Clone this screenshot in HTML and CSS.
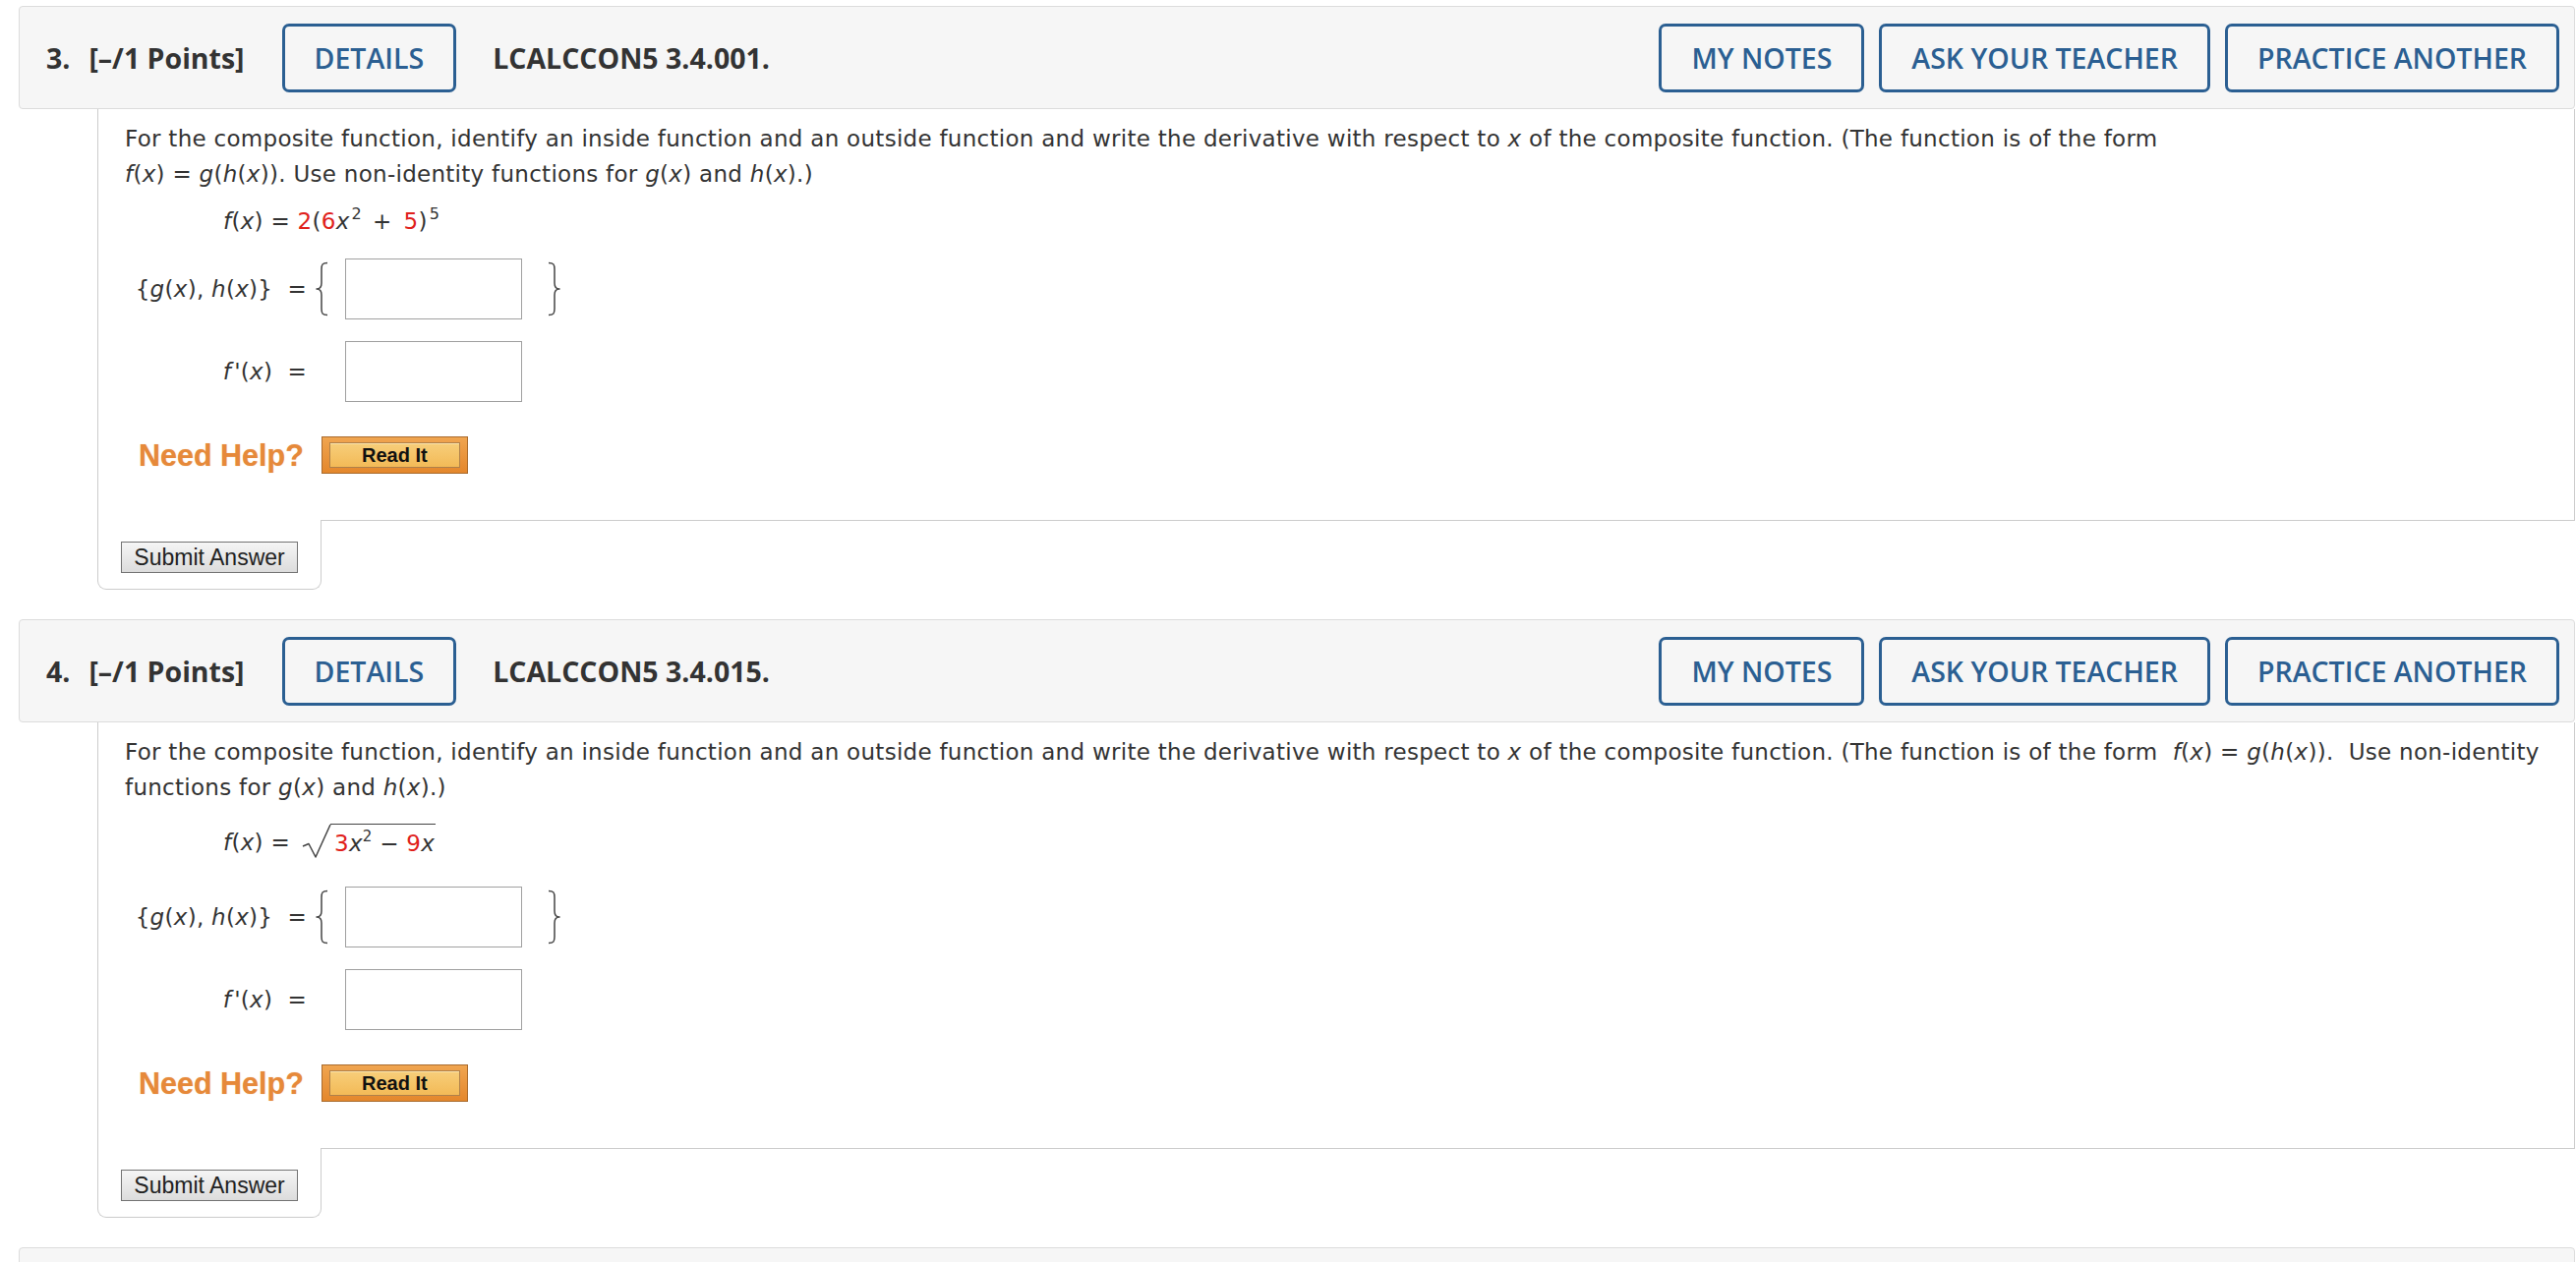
FILE: index.html
```html
<!DOCTYPE html>
<html lang="en">
<head>
<meta charset="utf-8">
<title>WebAssign questions</title>
<link rel="stylesheet" href="styles.css">
</head>
<body>
<div class="page">

  <section class="question">
    <div class="qhead">
      <span class="qnum">3.</span>
      <span class="qpts">[–/1 Points]</span>
      <button class="hbtn">DETAILS</button>
      <span class="qid">LCALCCON5 3.4.001.</span>
      <div class="hright">
        <button class="hbtn">MY NOTES</button>
        <button class="hbtn">ASK YOUR TEACHER</button>
        <button class="hbtn">PRACTICE ANOTHER</button>
      </div>
    </div>
    <div class="qbody">
      <p class="prompt">For the composite function, identify an inside function and an outside function and write the derivative with respect to <i>x</i> of the composite function. (The function is of the form<br><i>f</i>(<i>x</i>) = <i>g</i>(<i>h</i>(<i>x</i>)). Use non-identity functions for <i>g</i>(<i>x</i>) and <i>h</i>(<i>x</i>).)</p>
      <div class="formula"><i>f</i>(<i>x</i>) = <span class="red">2</span>(<span class="red">6</span><i>x</i><sup class="sp">2</sup><span class="op">+</span><span class="red">5</span>)<sup class="sp">5</sup></div>
      <div class="answers">
        <div class="alabel">{<i>g</i>(<i>x</i>), <i>h</i>(<i>x</i>)} &nbsp;=</div>
        <svg class="brace" viewBox="0 0 16 56" width="16" height="56"><path d="M13 1.5 C8 1.5 7 3 7 8 L7 22 C7 26 5 28 2 28 C5 28 7 30 7 34 L7 48 C7 53 8 54.5 13 54.5"/></svg>
        <input class="ans" type="text">
        <svg class="brace right" viewBox="0 0 16 56" width="16" height="56"><path d="M3 1.5 C8 1.5 9 3 9 8 L9 22 C9 26 11 28 14 28 C11 28 9 30 9 34 L9 48 C9 53 8 54.5 3 54.5"/></svg>
        <div class="alabel"><i class="fp">f</i>'(<i>x</i>) &nbsp;=</div>
        <input class="ans second" type="text">
      </div>
      <div class="help">
        <span class="needhelp">Need Help?</span>
        <span class="readit"><span class="readit-in">Read It</span></span>
      </div>
    </div>
    <div class="qfoot">
      <div class="submittab"><button class="submit">Submit Answer</button></div>
      <div class="footfill"></div>
    </div>
  </section>

  <section class="question">
    <div class="qhead">
      <span class="qnum">4.</span>
      <span class="qpts">[–/1 Points]</span>
      <button class="hbtn">DETAILS</button>
      <span class="qid">LCALCCON5 3.4.015.</span>
      <div class="hright">
        <button class="hbtn">MY NOTES</button>
        <button class="hbtn">ASK YOUR TEACHER</button>
        <button class="hbtn">PRACTICE ANOTHER</button>
      </div>
    </div>
    <div class="qbody">
      <p class="prompt">For the composite function, identify an inside function and an outside function and write the derivative with respect to <i>x</i> of the composite function. (The function is of the form&nbsp; <i>f</i>(<i>x</i>) = <i>g</i>(<i>h</i>(<i>x</i>)).&nbsp; Use non-identity<br>functions for <i>g</i>(<i>x</i>) and <i>h</i>(<i>x</i>).)</p>
      <div class="formula tall"><span class="lhs"><i>f</i>(<i>x</i>) =</span><span class="root"><svg class="radical" viewBox="0 0 30 40" width="30" height="40"><path d="M1 23 L7 20.5 L14 34 L29 1"/></svg><span class="radicand"><span class="red">3</span><i>x</i><sup>2</sup> − <span class="red">9</span><i>x</i></span></span></div>
      <div class="answers">
        <div class="alabel">{<i>g</i>(<i>x</i>), <i>h</i>(<i>x</i>)} &nbsp;=</div>
        <svg class="brace" viewBox="0 0 16 56" width="16" height="56"><path d="M13 1.5 C8 1.5 7 3 7 8 L7 22 C7 26 5 28 2 28 C5 28 7 30 7 34 L7 48 C7 53 8 54.5 13 54.5"/></svg>
        <input class="ans" type="text">
        <svg class="brace right" viewBox="0 0 16 56" width="16" height="56"><path d="M3 1.5 C8 1.5 9 3 9 8 L9 22 C9 26 11 28 14 28 C11 28 9 30 9 34 L9 48 C9 53 8 54.5 3 54.5"/></svg>
        <div class="alabel"><i class="fp">f</i>'(<i>x</i>) &nbsp;=</div>
        <input class="ans second" type="text">
      </div>
      <div class="help">
        <span class="needhelp">Need Help?</span>
        <span class="readit"><span class="readit-in">Read It</span></span>
      </div>
    </div>
    <div class="qfoot">
      <div class="submittab"><button class="submit">Submit Answer</button></div>
      <div class="footfill"></div>
    </div>
  </section>

  <section class="question">
    <div class="qhead empty"></div>
  </section>

</div>
</body>
</html>
```

FILE: styles.css
```css
html, body {
  margin: 0;
  padding: 0;
  background: #ffffff;
}

body {
  font-family: "DejaVu Sans", Verdana, sans-serif;
  font-size: 23px;
  letter-spacing: 0.28px;
  color: #333333;
  overflow: hidden;
}

.page {
  padding: 6px 1px 0 19px;
}

.question + .question {
  margin-top: 30px;
}

/* ---------- header bar ---------- */
.qhead {
  box-sizing: border-box;
  height: 105px;
  display: flex;
  align-items: center;
  background: #f6f6f6;
  border: 1px solid #dcdcdc;
  border-radius: 4px;
  padding: 0 15px 0 27px;
  font-family: "Open Sans", sans-serif;
  font-weight: 700;
  font-size: 28.5px;
  letter-spacing: 0;
  color: #333333;
}

.qnum {
  margin-right: 19px;
}

.qpts {
  margin-right: 38px;
}

.qid {
  margin-left: 37px;
}

.hright {
  margin-left: auto;
  display: flex;
  gap: 15px;
}

.hbtn {
  box-sizing: border-box;
  height: 70px;
  padding: 0 30px;
  border: 3px solid #2b5f92;
  border-radius: 7px;
  background: transparent;
  font-family: "Open Sans", sans-serif;
  font-weight: 600;
  font-size: 28.5px;
  color: #2b5f92;
  cursor: pointer;
}

/* ---------- question body ---------- */
.qbody {
  margin-left: 80px;
  border-left: 1px solid #cccccc;
  border-right: 1px solid #cccccc;
  padding: 12px 20px 47px 27px;
}

.prompt {
  margin: 0;
  line-height: 36px;
  white-space: nowrap;
}

.red {
  color: #e0211b;
}

sup {
  font-size: 15px;
  line-height: 0;
  vertical-align: 10px;
}

sup.sp {
  font-size: 16px;
  margin: 0 1px 0 2px;
}

.op {
  margin: 0 12px 0 10px;
}

.formula {
  margin: 12px 0 0 100px;
  height: 36px;
  line-height: 36px;
  white-space: nowrap;
}

.formula.tall {
  height: 51px;
  display: flex;
  align-items: center;
}

.root {
  display: flex;
  align-items: flex-start;
  margin-left: 12px;
  margin-top: 3px;
}

.radical {
  display: block;
}

.radical path,
.brace path {
  fill: none;
  stroke: #444444;
  stroke-width: 1.5;
  stroke-linejoin: round;
}

.radicand {
  display: block;
  border-top: 1.5px solid #444444;
  line-height: 32px;
  padding: 3px 1px 0 4px;
  margin-left: -1px;
  margin-top: 0.3px;
}

/* ---------- answer grid ---------- */
.answers {
  margin-top: 20px;
  display: grid;
  grid-template-columns: 185px 39px 180px 40px;
  grid-auto-rows: 62px;
  row-gap: 22px;
  align-items: center;
}

.alabel {
  text-align: right;
  white-space: nowrap;
}

.fp {
  margin-right: 3px;
}

.brace {
  display: block;
  margin-left: 8px;
}

.brace.right {
  margin-left: 24px;
}

.ans {
  box-sizing: border-box;
  width: 180px;
  height: 62px;
  margin: 0;
  border: 1px solid #a0a0a0;
  background: #ffffff;
  padding: 0 6px;
  font: inherit;
}

.ans.second {
  grid-column: 3;
}

/* ---------- help ---------- */
.help {
  margin-top: 35px;
  margin-left: 14px;
  display: flex;
  align-items: center;
  height: 38px;
  letter-spacing: 0;
}

.needhelp {
  font-family: "Liberation Sans", Arial, sans-serif;
  font-weight: 700;
  font-size: 30.5px;
  color: #e6893a;
  margin-right: 18px;
  text-shadow: 0 0 1px rgba(230, 137, 58, 0.5);
}

.readit {
  box-sizing: border-box;
  width: 149px;
  height: 38px;
  display: flex;
  padding: 5px 7px;
  border: 1px solid #a96b2e;
  background: linear-gradient(#f0a550, #e4872c);
}

.readit-in {
  flex: 1;
  border: 1px solid #b0814a;
  background: linear-gradient(#f7ce7a, #f3ba57);
  box-shadow: inset 0 1px 0 #fbe3ad;
  font-family: "Liberation Sans", Arial, sans-serif;
  font-weight: 700;
  font-size: 20px;
  line-height: 24px;
  text-align: center;
  color: #111111;
}

/* ---------- footer / submit tab ---------- */
.qfoot {
  margin-left: 80px;
  display: flex;
}

.submittab {
  box-sizing: border-box;
  width: 228px;
  border: 1px solid #cccccc;
  border-top: none;
  border-radius: 0 0 9px 9px;
  padding: 22px 0 16px 23px;
}

.submit {
  box-sizing: border-box;
  width: 180px;
  height: 32px;
  padding: 0;
  border: 1px solid #737373;
  background: linear-gradient(#f5f5f5, #dcdcdc);
  font-family: "Liberation Sans", Arial, sans-serif;
  font-size: 23px;
  letter-spacing: 0;
  color: #222222;
  display: block;
}

.footfill {
  flex: 1;
  border-top: 1px solid #cccccc;
  margin-left: -1px;
}

.qhead.empty {
  height: 105px;
}
```
